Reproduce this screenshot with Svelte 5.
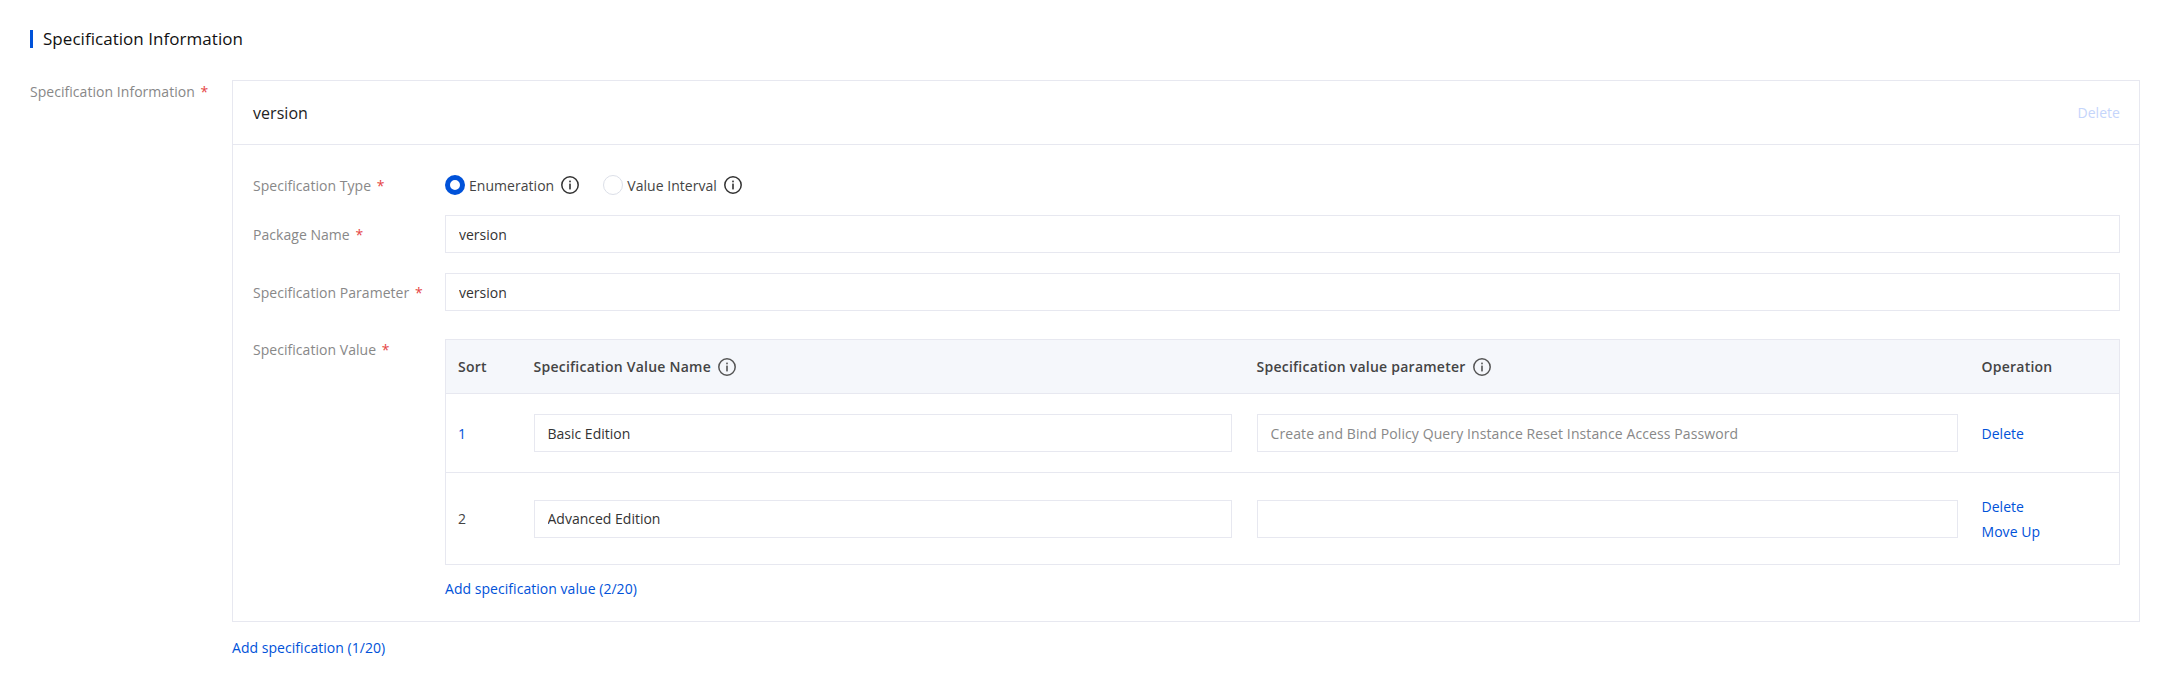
<script>
  let specValues = [
    { sort: 1, name: "Basic Edition", param: "", first: true },
    { sort: 2, name: "Advanced Edition", param: "", first: false }
  ];
</script>

<main class="page">
  <h2 class="title">Specification Information</h2>

  <div class="form-row outer">
    <div class="outer-label">Specification Information <i>*</i></div>
    <div class="outer-body">
      <section class="card">
        <header class="card-head">
          <span class="card-name">version</span>
          <span class="delete-off">Delete</span>
        </header>
        <div class="card-body">
          <div class="field type-field">
            <div class="label">Specification Type <i>*</i></div>
            <div class="radios">
              <label class="radio">
                <span class="dot on"></span>Enumeration
                {@render info()}
              </label>
              <label class="radio">
                <span class="dot"></span>Value Interval
                {@render info()}
              </label>
            </div>
          </div>
          <div class="field">
            <div class="label">Package Name <i>*</i></div>
            <input class="input" value="version" />
          </div>
          <div class="field">
            <div class="label">Specification Parameter <i>*</i></div>
            <input class="input" value="version" />
          </div>
          <div class="field values">
            <div class="label">Specification Value <i>*</i></div>
            <div class="values-body">
              <table>
                <colgroup>
                  <col style="width:76px" />
                  <col style="width:723px" />
                  <col />
                  <col style="width:150px" />
                </colgroup>
                <thead>
                  <tr>
                    <th>Sort</th>
                    <th><span class="th-in">Specification Value Name {@render info()}</span></th>
                    <th><span class="th-in">Specification value parameter {@render info()}</span></th>
                    <th>Operation</th>
                  </tr>
                </thead>
                <tbody>
                  {#each specValues as row}
                    <tr class:two={!row.first}>
                      <td class:num-link={row.first}>{row.sort}</td>
                      <td class="name-cell"><input class="input" value={row.name} /></td>
                      <td>
                        <input
                          class="input"
                          value={row.param}
                          placeholder={row.first ? "Create and Bind Policy Query Instance Reset Instance Access Password" : ""}
                        />
                      </td>
                      <td class="ops">
                        <a href="#top">Delete</a>
                        {#if !row.first}<a href="#top">Move Up</a>{/if}
                      </td>
                    </tr>
                  {/each}
                </tbody>
              </table>
              <a class="add" href="#top">Add specification value (2/20)</a>
            </div>
          </div>
        </div>
      </section>
      <a class="add-spec" href="#top">Add specification (1/20)</a>
    </div>
  </div>
</main>

{#snippet info()}
  <svg class="info" viewBox="0 0 18 18" width="18" height="18" aria-hidden="true">
    <circle cx="9" cy="9" r="8.2" fill="none" stroke="currentColor" stroke-width="1.5" />
    <rect x="8.2" y="7.6" width="1.6" height="5.8" fill="currentColor" />
    <rect x="8.2" y="4.6" width="1.6" height="1.7" fill="currentColor" />
  </svg>
{/snippet}

<style>
  :global(body) {
    margin: 0;
    background: #fff;
    font-family: "Open Sans", "Liberation Sans", sans-serif;
    font-size: 14px;
    letter-spacing: 0.04px;
    color: #333;
  }
  .page {
    padding: 30px 20px 0 30px;
  }
  .title {
    margin: 0;
    height: 18px;
    line-height: 18px;
    border-left: 3px solid #0052d9;
    padding-left: 10px;
    font-size: 17px;
    font-weight: 500;
    color: #111;
  }
  i {
    font-style: normal;
    color: #e54545;
    margin-left: 2px;
  }
  .outer {
    display: flex;
    margin-top: 32px;
  }
  .outer-label {
    width: 202px;
    flex: none;
    line-height: 22px;
    padding-top: 1px;
    color: #888;
  }
  .outer-body {
    flex: 1;
    min-width: 0;
  }
  .card {
    border: 1px solid #e7e8f0;
  }
  .card-head {
    display: flex;
    justify-content: space-between;
    align-items: center;
    height: 63px;
    padding: 0 19px 0 20px;
    border-bottom: 1px solid #e7e8f0;
  }
  .card-name {
    font-size: 16px;
    color: #222;
  }
  .delete-off {
    color: #c5d5fb;
  }
  .card-body {
    padding: 29px 19px 21px 20px;
  }
  .field {
    display: flex;
    align-items: center;
    margin-bottom: 20px;
  }
  .type-field {
    height: 22px;
    margin-bottom: 19px;
  }
  .label {
    width: 192px;
    flex: none;
    color: #888;
  }
  .radios {
    display: flex;
    gap: 24px;
  }
  .radio {
    display: flex;
    align-items: center;
    color: #444;
  }
  .dot {
    width: 20px;
    height: 20px;
    box-sizing: border-box;
    border: 1px solid #dcdfe8;
    border-radius: 50%;
    margin-right: 4px;
  }
  .dot.on {
    border: 5px solid #0052d9;
  }
  .info {
    margin-left: 7px;
    color: #333;
  }
  .input {
    flex: 1;
    min-width: 0;
    width: 100%;
    height: 38px;
    box-sizing: border-box;
    padding: 0 13px;
    border: 1px solid #e7e8f0;
    background: #fff;
    font: inherit;
    color: #333;
    outline: none;
  }
  .input::placeholder {
    color: #888;
    opacity: 1;
    letter-spacing: 0.1px;
  }
  .values {
    align-items: flex-start;
    margin: 28px 0 0;
  }
  .values .label {
    padding-top: 1px;
  }
  .values-body {
    flex: 1;
    min-width: 0;
  }
  table {
    width: 100%;
    table-layout: fixed;
    border-collapse: collapse;
    border: 1px solid #e7e8f0;
  }
  th {
    height: 53px;
    padding: 0 12px;
    background: #f5f7fb;
    border-bottom: 1px solid #e7e8f0;
    text-align: left;
    font-weight: 600;
    letter-spacing: 0.24px;
    color: #444;
  }
  .th-in {
    display: flex;
    align-items: center;
  }
  .th-in .info {
    color: #555;
  }
  td {
    height: 78px;
    padding: 0 12px;
    border-bottom: 1px solid #e7e8f0;
    color: #444;
  }
  td.name-cell {
    padding-right: 13px;
  }
  tr.two td {
    height: 91px;
  }
  .num-link {
    color: #0052d9;
  }
  a {
    color: #0052d9;
    text-decoration: none;
  }
  .ops a {
    display: block;
    line-height: 25px;
  }
  .add {
    display: block;
    margin-top: 13px;
    line-height: 22px;
  }
  .add-spec {
    display: block;
    margin-top: 15px;
    line-height: 22px;
  }
</style>
